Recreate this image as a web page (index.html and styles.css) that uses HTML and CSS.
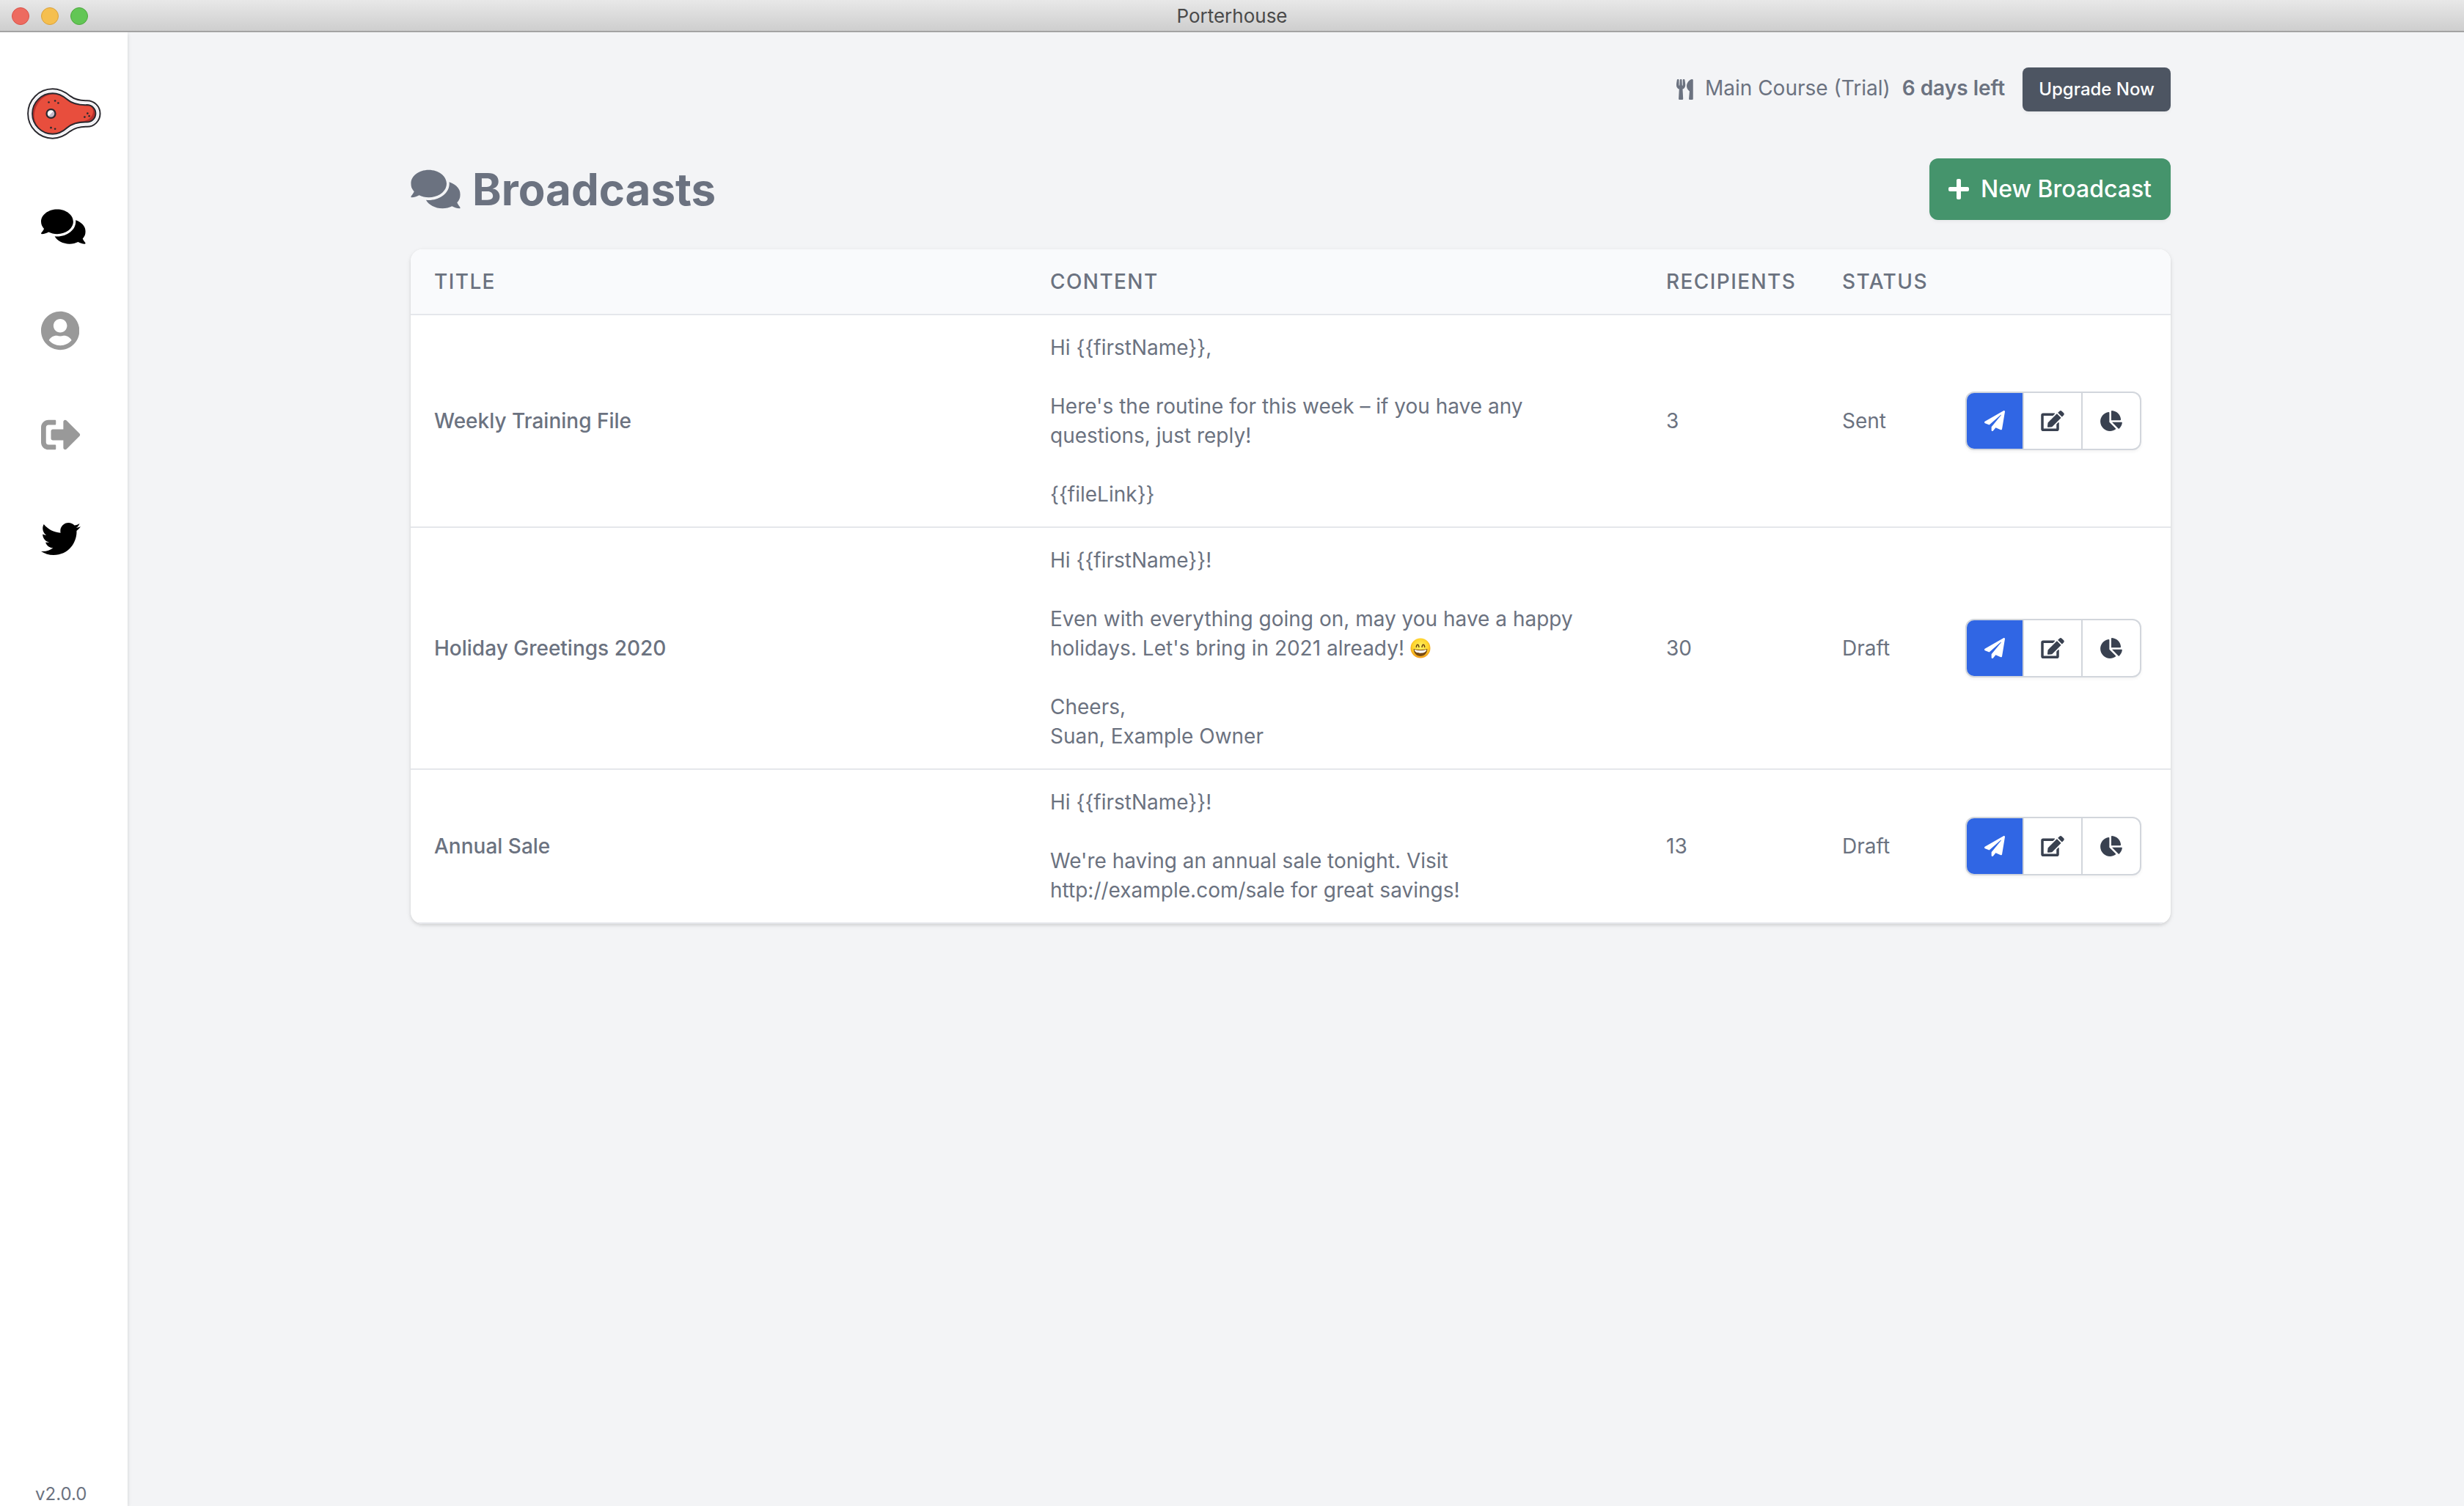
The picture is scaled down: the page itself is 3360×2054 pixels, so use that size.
FILE: index.html
```html
<!DOCTYPE html>
<html lang="en">
<head>
<meta charset="utf-8">
<title>Porterhouse</title>
<link rel="stylesheet" href="styles.css">
</head>
<body>
<svg class="sprite" aria-hidden="true">
  <symbol id="comments" viewBox="0 0 576 512"><path d="M416 192c0-88.4-93.1-160-208-160S0 103.6 0 192c0 34.3 14.1 65.9 38 92-13.4 30.2-35.5 54.2-35.8 54.5-2.2 2.3-2.8 5.7-1.5 8.7S4.8 352 8 352c36.6 0 66.9-12.3 88.7-25 32.2 15.7 70.3 25 111.3 25 114.9 0 208-71.6 208-160zm122 220c23.9-26 38-57.7 38-92 0-66.9-53.5-124.2-129.3-148.1.9 6.6 1.3 13.3 1.3 20.1 0 105.9-107.7 192-240 192-10.8 0-21.3-.8-31.7-1.9C207.8 439.6 281.8 480 368 480c41 0 79.1-9.2 111.3-25 21.8 12.7 52.1 25 88.7 25 3.2 0 6.1-1.9 7.3-4.8 1.3-2.9.7-6.3-1.5-8.7-.3-.3-22.4-24.2-35.8-54.5z"/></symbol>
  <symbol id="plane" viewBox="0 0 512 512"><path d="M476 3.2L12.5 270.6c-18.1 10.4-15.8 35.6 2.2 43.2L121 358.4l287.3-253.2c5.5-4.9 13.3 2.6 8.6 8.3L176 407v80.5c0 23.6 28.5 32.9 42.5 15.8L282 426l124.6 52.2c14.2 6 30.4-2.9 33-18.2l72-432C515 7.8 493.3-6.8 476 3.2z"/></symbol>
  <symbol id="edit" viewBox="0 0 576 512"><path d="M402.6 83.2l90.2 90.2c3.8 3.8 3.8 10 0 13.8L274.4 405.6l-92.8 10.3c-12.4 1.4-22.9-9.1-21.5-21.5l10.3-92.8L388.8 83.2c3.8-3.8 10-3.8 13.8 0zm162-22.9l-48.8-48.8c-15.2-15.2-39.9-15.2-55.2 0l-35.4 35.4c-3.8 3.8-3.8 10 0 13.8l90.2 90.2c3.8 3.8 10 3.8 13.8 0l35.4-35.4c15.2-15.3 15.2-40 0-55.2zM384 346.2V448H64V128h229.8c3.2 0 6.2-1.3 8.5-3.5l40-40c7.6-7.6 2.2-20.5-8.5-20.5H48C21.5 64 0 85.5 0 112v352c0 26.5 21.5 48 48 48h352c26.5 0 48-21.5 48-48V306.2c0-10.7-12.9-16-20.5-8.5l-40 40c-2.2 2.3-3.5 5.3-3.5 8.5z"/></symbol>
  <symbol id="pie" viewBox="0 0 544 512"><path d="M527.79 288H290.5l158.03 158.03c6.04 6.04 15.98 6.53 22.19.68 38.7-36.46 65.32-85.61 73.13-140.86 1.34-9.46-6.51-17.85-16.06-17.85zm-15.83-64.8C503.72 103.74 408.26 8.28 288.8.04 279.68-.59 272 7.1 272 16.24V240h223.77c9.14 0 16.82-7.68 16.19-16.8zM224 288V50.71c0-9.55-8.39-17.4-17.84-16.06C86.99 51.49-4.1 155.6.14 280.37 4.5 408.51 114.83 513.59 243.03 511.98c50.4-.63 96.97-16.87 135.26-44.03 7.9-5.6 8.42-17.23 1.57-24.08L224 288z"/></symbol>
</svg>

<header class="titlebar">
  <div class="lights">
    <span class="light light-close"></span>
    <span class="light light-minimize"></span>
    <span class="light light-zoom"></span>
  </div>
  <span class="window-title">Porterhouse</span>
</header>

<div class="app">
  <nav class="sidebar" aria-label="Main">
    <a class="logo" href="#" aria-label="Porterhouse">
      <svg viewBox="108 359 306 212">
        <path d="M215 363C245 363 266 375 287 392C309 409 330 412 357 411A54 54 0 0 1 357 519C330 518 309 522 287 538C266 556 245 567 215 567A102 102 0 0 1 215 363Z" fill="#fff" stroke="#2b2a30" stroke-width="6"/>
        <path d="M215 373C242 373 260 384 281 400C304 417 328 421 357 420A45 45 0 0 1 357 510C328 509 304 514 281 530C260 546 242 557 215 557A92 92 0 0 1 215 373Z" fill="none" stroke="#e9e6ee" stroke-width="4"/>
        <path d="M215 381C240 381 258 392 275 406C296 424 325 430 357 429A35 35 0 0 1 357 500C325 499 296 506 275 523C258 538 240 549 215 549A84 84 0 0 1 215 381Z" fill="#b92f2c"/>
        <path d="M222 385C242 385 257 395 273 409C294 427 325 433 353 432C373 432 382 442 382 455C382 476 366 490 345 495C313 497 292 504 273 520C256 535 240 546 215 546C170 546 140 514 139 474C142 420 178 385 222 385Z" fill="#e84e3d"/>
        <path d="M215 381C240 381 258 392 275 406C296 424 325 430 357 429A35 35 0 0 1 357 500C325 499 296 506 275 523C258 538 240 549 215 549A84 84 0 0 1 215 381Z" fill="none" stroke="#2b2a30" stroke-width="6"/>
        <circle cx="208" cy="465" r="18" fill="#c6bccb"/>
        <path d="M195 478A18 18 0 0 1 221 452Z" fill="#fff"/>
        <circle cx="208" cy="465" r="18" fill="none" stroke="#2b2a30" stroke-width="7"/>
        <g fill="#2b2a30"><circle cx="199" cy="418" r="4"/><circle cx="225" cy="412" r="4"/><circle cx="238" cy="421" r="4"/><circle cx="208" cy="523" r="4"/><circle cx="225" cy="528" r="4"/><circle cx="359" cy="464" r="4"/><circle cx="366" cy="475" r="4"/><circle cx="347" cy="479" r="4"/></g>
      </svg>
    </a>
    <a class="nav-link nav-link-strong" href="#" aria-label="Broadcasts"><svg viewBox="0 0 576 512"><use href="#comments"/></svg></a>
    <a class="nav-link" href="#" aria-label="Account"><svg viewBox="0 0 496 512"><path d="M248 8C111 8 0 119 0 256s111 248 248 248 248-111 248-248S385 8 248 8zm0 96c48.600 0 88 39.400 88 88s-39.400 88-88 88-88-39.400-88-88 39.400-88 88-88zm0 344c-58.700 0-111.300-26.600-146.500-68.200 18.800-35.400 55.600-59.800 98.500-59.800 2.400 0 4.800.4 7.100 1.100 13 4.200 26.600 6.900 40.900 6.900 14.300 0 28-2.700 40.900-6.900 2.300-.7 4.700-1.100 7.100-1.100 42.900 0 79.700 24.400 98.500 59.800C359.300 421.400 306.700 448 248 448z"/></svg></a>
    <a class="nav-link" href="#" aria-label="Sign out"><svg viewBox="0 0 512 512"><path d="M497 273L329 441c-15 15-41 4.500-41-17v-96H152c-13.300 0-24-10.700-24-24v-96c0-13.300 10.700-24 24-24h136V88c0-21.400 25.900-32 41-17l168 168c9.300 9.400 9.300 24.600 0 34zM192 436v-40c0-6.600-5.400-12-12-12H96c-17.700 0-32-14.300-32-32V160c0-17.700 14.300-32 32-32h84c6.600 0 12-5.400 12-12V76c0-6.600-5.400-12-12-12H96c-53 0-96 43-96 96v192c0 53 43 96 96 96h84c6.600 0 12-5.400 12-12z"/></svg></a>
    <a class="nav-link nav-link-strong" href="#" aria-label="Twitter"><svg viewBox="0 0 512 512"><path d="M459.370 151.716c.325 4.548.325 9.097.325 13.645 0 138.720-105.583 298.558-298.558 298.558-59.452 0-114.680-17.219-161.137-47.106 8.447.974 16.568 1.299 25.340 1.299 49.055 0 94.213-16.568 130.274-44.832-46.132-.975-84.792-31.188-98.112-72.772 6.498.974 12.995 1.624 19.818 1.624 9.421 0 18.843-1.300 27.614-3.573-48.081-9.747-84.143-51.980-84.143-102.985v-1.299c13.969 7.797 30.214 12.670 47.431 13.319-28.264-18.843-46.781-51.005-46.781-87.391 0-19.492 5.197-37.360 14.294-52.954 51.655 63.675 129.300 105.258 216.365 109.807-1.624-7.797-2.599-15.918-2.599-24.040 0-57.828 46.782-104.934 104.934-104.934 30.213 0 57.502 12.670 76.670 33.137 23.715-4.548 46.456-13.320 66.599-25.340-7.798 24.366-24.366 44.833-46.132 57.827 21.117-2.273 41.584-8.122 60.426-16.243-14.292 20.791-32.161 39.308-52.628 54.253z"/></svg></a>
    <span class="version">v2.0.0</span>
  </nav>

  <main class="main">
    <div class="container">
      <div class="plan">
        <svg class="plan-icon" viewBox="0 0 416 512" aria-hidden="true"><path d="M207.900 15.200c.8 4.700 16.100 94.500 16.100 128.800 0 52.300-27.800 89.600-68.900 104.600L168 486.700c.7 13.700-10.200 25.300-24 25.300H80c-13.700 0-24.700-11.500-24-25.300l12.900-238.100C27.700 233.600 0 196.200 0 144 0 109.600 15.300 19.900 16.100 15.200 19.300-5.100 61.400-5.400 64 16.300v141.200c1.300 3.400 15.100 3.200 16 0 1.400-25.300 7.900-139.200 8-141.800 3.300-20.800 44.700-20.800 47.900 0 .2 2.700 6.600 116.500 8 141.800.9 3.200 14.800 3.400 16 0V16.300c2.600-21.600 44.800-21.400 48-1.100zm119.200 285.700l-15 185.100c-1.200 14 9.900 26 23.900 26h56c13.300 0 24-10.700 24-24V24c0-13.200-10.700-24-24-24-82.500 0-221.400 178.500-64.900 300.900z"/></svg>
        <span>Main Course (Trial)</span>
        <strong class="days-left">6 days left</strong>
        <button class="btn btn-upgrade" type="button">Upgrade Now</button>
      </div>

      <div class="page-head">
        <h1 class="page-title"><svg viewBox="0 0 576 512" aria-hidden="true"><use href="#comments"/></svg>Broadcasts</h1>
        <button class="btn btn-new" type="button"><svg viewBox="0 0 448 512" aria-hidden="true"><path d="M416 208H272V64c0-17.670-14.330-32-32-32h-32c-17.670 0-32 14.330-32 32v144H32c-17.670 0-32 14.330-32 32v32c0 17.670 14.330 32 32 32h144v144c0 17.670 14.330 32 32 32h32c17.670 0 32-14.330 32-32V304h144c17.670 0 32-14.330 32-32v-32c0-17.670-14.330-32-32-32z"/></svg>New Broadcast</button>
      </div>

      <div class="card">
        <table class="table">
          <colgroup>
            <col class="col-wide"><col class="col-wide"><col class="col-recipients"><col class="col-status"><col class="col-actions">
          </colgroup>
          <thead>
            <tr><th scope="col">Title</th><th scope="col">Content</th><th scope="col">Recipients</th><th scope="col">Status</th><td></td></tr>
          </thead>
          <tbody>
            <tr>
              <th scope="row">Weekly Training File</th>
              <td class="message">Hi {{firstName}},

Here's the routine for this week – if you have any questions, just reply!

{{fileLink}}</td>
              <td>3</td>
              <td>Sent</td>
              <td>
                <div class="actions">
                  <button class="action action-send" type="button" aria-label="Send"><svg><use href="#plane"/></svg></button>
                  <button class="action" type="button" aria-label="Edit"><svg><use href="#edit"/></svg></button>
                  <button class="action" type="button" aria-label="Report"><svg><use href="#pie"/></svg></button>
                </div>
              </td>
            </tr>
            <tr>
              <th scope="row">Holiday Greetings 2020</th>
              <td class="message">Hi {{firstName}}!

Even with everything going on, may you have a happy holidays. Let's bring in 2021 already! <svg class="emoji" viewBox="0 0 54 54" role="img" aria-label="Grinning face"><defs><radialGradient id="face" cx=".5" cy=".42" r=".6"><stop offset="0" stop-color="#fff266"/><stop offset=".65" stop-color="#ffd52c"/><stop offset="1" stop-color="#ef8f14"/></radialGradient></defs><circle cx="27" cy="27" r="26" fill="url(#face)"/><path d="M16 24c1-8 6-8 7 0M31 24c1-8 6-8 7 0" fill="none" stroke="#6b4310" stroke-width="3" stroke-linecap="round"/><path d="M9 29c10 3 26 3 36 0c0 12-8 19-18 19S9 41 9 29z" fill="#7a4a12"/><path d="M11 31c10 3 22 3 32 0c-1 6-6 9-16 9s-15-3-16-9z" fill="#fff"/></svg>

Cheers,
Suan, Example Owner</td>
              <td>30</td>
              <td>Draft</td>
              <td>
                <div class="actions">
                  <button class="action action-send" type="button" aria-label="Send"><svg><use href="#plane"/></svg></button>
                  <button class="action" type="button" aria-label="Edit"><svg><use href="#edit"/></svg></button>
                  <button class="action" type="button" aria-label="Report"><svg><use href="#pie"/></svg></button>
                </div>
              </td>
            </tr>
            <tr>
              <th scope="row">Annual Sale</th>
              <td class="message">Hi {{firstName}}!

We're having an annual sale tonight. Visit http://example.com/sale for great savings!</td>
              <td>13</td>
              <td>Draft</td>
              <td>
                <div class="actions">
                  <button class="action action-send" type="button" aria-label="Send"><svg><use href="#plane"/></svg></button>
                  <button class="action" type="button" aria-label="Edit"><svg><use href="#edit"/></svg></button>
                  <button class="action" type="button" aria-label="Report"><svg><use href="#pie"/></svg></button>
                </div>
              </td>
            </tr>
          </tbody>
        </table>
      </div>
    </div>
  </main>
</div>
</body>
</html>
```
FILE: styles.css
```css
* {
  box-sizing: border-box;
}

body {
  margin: 0;
  min-height: 100vh;
  display: flex;
  flex-direction: column;
  background: #f3f4f6;
  color: #6b7280;
  font-family: Inter, "Liberation Sans", sans-serif;
  font-size: 28px;
  line-height: 40px;
}

svg {
  display: block;
  fill: currentColor;
}

.sprite {
  display: none;
}

/* Window title bar */
.titlebar {
  display: grid;
  grid-template-columns: 1fr auto 1fr;
  align-items: center;
  height: 44px;
  padding: 2px 16px 0;
  border-bottom: 2px solid #a3a3a3;
  background: linear-gradient(#e8e8e8, #cecece);
}

.lights {
  display: flex;
  gap: 16px;
}

.light {
  width: 24px;
  height: 24px;
  border: 1px solid;
  border-radius: 50%;
}

.light-close {
  background: #ed6b60;
  border-color: #d9534a;
}

.light-minimize {
  background: #f5bf4f;
  border-color: #d9a13c;
}

.light-zoom {
  background: #62c655;
  border-color: #4ea73f;
}

.window-title {
  color: #4a4a4a;
  font-size: 26px;
}

/* Shell */
.app {
  flex: 1;
  display: flex;
}

.sidebar {
  flex: none;
  display: flex;
  flex-direction: column;
  width: 174px;
  padding: 76px 36px 0;
  background: #fff;
  box-shadow: 0 2px 6px rgba(0, 0, 0, 0.1), 0 2px 4px rgba(0, 0, 0, 0.06);
  clip-path: inset(0 -12px 0 0);
}

.logo svg {
  width: 102px;
  height: 70px;
}

.logo {
  margin-bottom: 92px;
}

.nav-link {
  height: 54px;
  margin-bottom: 88px;
  padding-left: 20px;
  color: #999;
}

.nav-link-strong {
  color: #000;
}

.nav-link svg {
  height: 54px;
}

.version {
  margin-top: auto;
  padding-left: 12px;
  font-size: 24px;
  line-height: 32px;
}

.main {
  flex: 1;
  padding: 48px 46px 48px 32px;
}

.container {
  max-width: 2400px;
  margin: 0 auto;
}

/* Buttons */
.btn {
  display: flex;
  align-items: center;
  border: 2px solid transparent;
  color: #fff;
  font-family: inherit;
  font-weight: 500;
  box-shadow: 0 2px 4px rgba(0, 0, 0, 0.05);
}

.btn-upgrade {
  margin-left: 24px;
  padding: 12px 20px;
  border-radius: 8px;
  background-color: #4d5562;
  font-size: 24px;
  line-height: 32px;
}

.btn-new {
  gap: 16px;
  padding: 16px 24px;
  border-radius: 12px;
  background-color: #45946c;
  font-size: 32px;
  line-height: 48px;
}

.btn-new svg {
  width: 28px;
  height: 32px;
}

/* Plan notice */
.plan {
  display: flex;
  align-items: baseline;
  justify-content: flex-end;
  margin-bottom: 64px;
}

.plan-icon {
  align-self: center;
  height: 28px;
  margin-right: 16px;
}

.days-left {
  margin-left: 16px;
  font-weight: 600;
}

/* Page heading */
.page-head {
  display: flex;
  align-items: center;
  justify-content: space-between;
  margin-bottom: 40px;
}

.page-title {
  display: flex;
  align-items: center;
  gap: 16px;
  margin: 0;
  font-size: 60px;
  font-weight: 700;
  line-height: 72px;
}

.page-title svg {
  width: 68px;
  height: 60px;
}

/* Broadcast table */
.card {
  overflow: hidden;
  border-radius: 16px;
  background: #fff;
  box-shadow: 0 2px 6px rgba(0, 0, 0, 0.1), 0 2px 4px rgba(0, 0, 0, 0.06);
}

.table {
  width: 100%;
  table-layout: fixed;
  border-collapse: separate;
  border-spacing: 0;
}

.col-wide {
  width: 35%;
}

.col-recipients {
  width: 10%;
}

.col-status {
  width: 7%;
}

.col-actions {
  width: 13%;
}

.table th,
.table td {
  padding: 24px 32px;
  border-bottom: 2px solid #e5e7eb;
  text-align: left;
  vertical-align: middle;
}

.table th {
  font-weight: 500;
}

.table thead th,
.table thead td {
  background: #f9fafc;
}

.table thead th {
  letter-spacing: 0.05em;
  text-transform: uppercase;
}

.message {
  white-space: pre-line;
}

.emoji {
  display: inline-block;
  width: 28px;
  height: 28px;
  vertical-align: -4px;
}

.table .actions {
  display: flex;
  width: 240px;
  height: 80px;
  border-radius: 12px;
  box-shadow: 0 2px 4px rgba(0, 0, 0, 0.05);
}

.action {
  flex: none;
  display: flex;
  align-items: center;
  justify-content: center;
  width: 82px;
  padding: 0;
  border: 2px solid #d2d6dc;
  background: #fff;
  color: #394150;
}

.action + .action {
  margin-left: -2px;
}

.action:first-child {
  width: 80px;
  border-radius: 12px 0 0 12px;
}

.action:last-child {
  border-radius: 0 12px 12px 0;
}

.action-send {
  background: #3066e4;
  color: #fff;
}

.action svg {
  width: 32px;
  height: 28px;
}
```
